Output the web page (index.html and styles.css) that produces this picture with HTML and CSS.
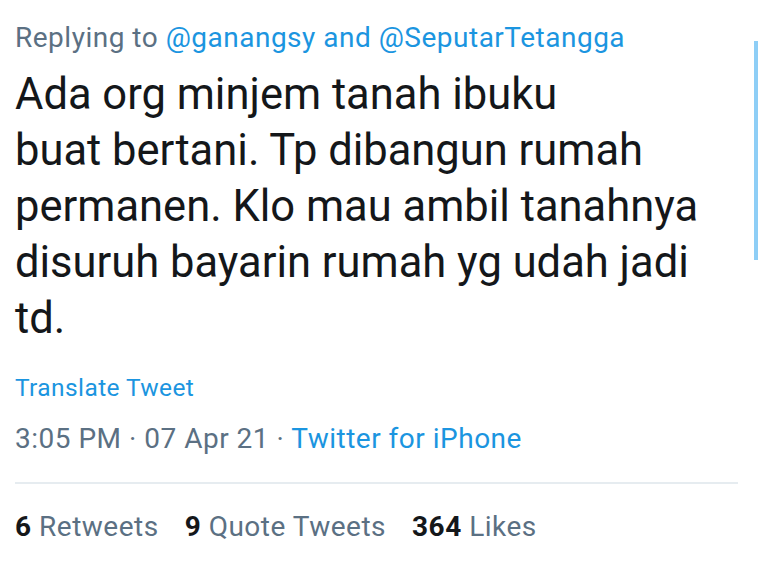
FILE: index.html
```html
<!DOCTYPE html>
<html>
<head>
<meta charset="utf-8">
<link rel="stylesheet" href="styles.css">
</head>
<body>
<div class="tweet">
  <div class="replying">Replying to <span class="link">@ganangsy</span> <span class="link">and</span> <span class="link">@SeputarTetangga</span></div>
  <div class="body">Ada org minjem tanah ibuku<br>buat bertani. Tp dibangun rumah permanen. Klo mau ambil tanahnya disuruh bayarin rumah yg udah jadi td.</div>
  <div class="translate">Translate Tweet</div>
  <div class="meta">3:05 PM · 07 Apr 21 · <span class="link">Twitter for iPhone</span></div>
  <div class="divider"></div>
  <div class="stats">
    <span class="stat"><b>6</b> Retweets</span>
    <span class="stat"><b>9</b> Quote Tweets</span>
    <span class="stat"><b>364</b> Likes</span>
  </div>
</div>
<div class="scrollbar"></div>
</body>
</html>
```
FILE: styles.css
```css
html, body {
  margin: 0;
  padding: 0;
  background: #ffffff;
}
body {
  font-family: Roboto, "Liberation Sans", sans-serif;
  width: 758px;
  height: 565px;
  overflow: hidden;
  position: relative;
}
.tweet {
  padding: 22px 20px 0 15px;
  width: 723px;
}
.replying {
  font-size: 28px;
  line-height: 32px;
  letter-spacing: 0.5px;
  color: #5b7083;
  white-space: nowrap;
}
.link {
  color: #1b95e0;
}
.body {
  margin-top: 13px;
  font-size: 43.5px;
  line-height: 56px;
  color: #14171a;
}
.translate {
  margin-top: 27px;
  font-size: 24.5px;
  line-height: 28px;
  letter-spacing: 0.4px;
  color: #1b95e0;
}
.meta {
  margin-top: 21px;
  font-size: 28px;
  line-height: 32px;
  letter-spacing: 0.5px;
  color: #5b7083;
}
.divider {
  margin-top: 27px;
  height: 2px;
  background: #e6ecf0;
}
.stats {
  margin-top: 27px;
  font-size: 28px;
  line-height: 32px;
  letter-spacing: 0.5px;
  color: #5b7083;
  display: flex;
  gap: 26px;
}
.stats b {
  color: #14171a;
  font-weight: 700;
}
.scrollbar {
  position: absolute;
  left: 754px;
  top: 41px;
  width: 4px;
  height: 219px;
  background: #8ecef6;
}
```
